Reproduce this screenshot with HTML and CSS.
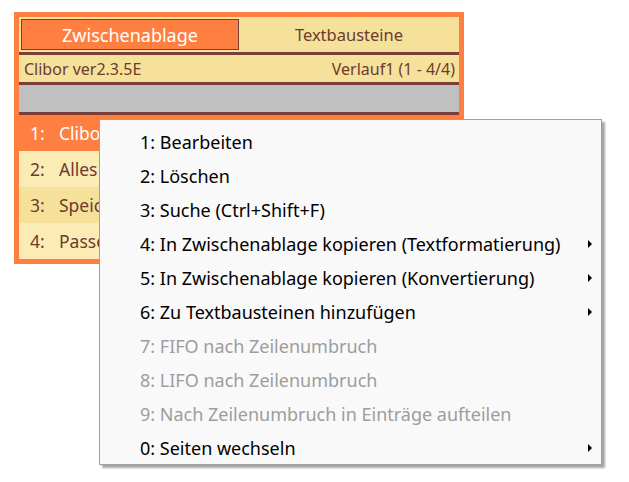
FILE: index.html
```html
<!DOCTYPE html>
<html lang="de">
<head>
  <meta charset="UTF-8" />
  <title>Clibor</title>
  <link rel="stylesheet" href="styles.css">
</head>
<body>

  <div class="clibor">
    <!-- tab switch -->
    <div class="tabs">
      <div class="tab active">Zwischenablage</div>
      <div class="tab">Textbausteine</div>
    </div>

    <div class="info">
      <span>Clibor ver2.3.5E</span>
      <span>Verlauf1 (1 - 4/4)</span>
    </div>

    <div class="search"></div>

    <ul class="entries">
      <li class="entry selected"><span class="num">1:</span><span class="text">Clibor</span></li>
      <li class="entry"><span class="num">2:</span><span class="text">Alles</span></li>
      <li class="entry alt"><span class="num">3:</span><span class="text">Speichern</span></li>
      <li class="entry"><span class="num">4:</span><span class="text">Passen</span></li>
    </ul>
  </div>

  <!-- right click menu -->
  <ul class="menu">
    <li>1: Bearbeiten</li>
    <li>2: Löschen</li>
    <li>3: Suche (Ctrl+Shift+F)</li>
    <li class="sub">4: In Zwischenablage kopieren (Textformatierung)</li>
    <li class="sub">5: In Zwischenablage kopieren (Konvertierung)</li>
    <li class="sub">6: Zu Textbausteinen hinzufügen</li>
    <li class="disabled">7: FIFO nach Zeilenumbruch</li>
    <li class="disabled">8: LIFO nach Zeilenumbruch</li>
    <li class="disabled">9: Nach Zeilenumbruch in Einträge aufteilen</li>
    <li class="sub">0: Seiten wechseln</li>
  </ul>

</body>
</html>
```

FILE: styles.css
```css
body {
  margin: 0;
  background: #fff;
  font-family: 'Noto Sans', sans-serif;
  position: relative;
  height: 482px;
  overflow: hidden;
}

.clibor {
  margin: 12px 0 0 14px;
  width: 440px;
  border: 5px solid #fe7f3f;
  background: #fe7f3f;
}

.tabs {
  display: flex;
  background: #f5e19a;
  padding: 2px 0 2px 2px;
  height: 31px;
  border-bottom: 3px solid #7a3e39;
}

.tab {
  flex: 1;
  display: flex;
  align-items: center;
  justify-content: center;
  color: #6e3b2e;
  font-size: 16.5px;
}

.tab.active {
  flex: 0 0 216px;
  background: #fe7f3f;
  border: 1px solid #7a3e39;
  color: #fff;
  font-size: 18px;
}

.info {
  display: flex;
  justify-content: space-between;
  align-items: center;
  height: 27px;
  padding: 0 4px 0 5px;
  background: #f5e19a;
  color: #6e3b2e;
  font-size: 16px;
  border-bottom: 3px solid #7a3e39;
}

.search {
  height: 27px;
  background: #c0c0c0;
  border-bottom: 3px solid #7a3e39;
}

.entries {
  list-style: none;
  margin: 0;
  padding: 0;
}

.entry {
  height: 36px;
  display: flex;
  align-items: center;
  padding-left: 11px;
  background: #fbebb5;
  color: #6e3b2e;
  font-size: 17.5px;
  white-space: nowrap;
}

.entry.alt {
  background: #f5e19a;
}

.entry.selected {
  background: #fe7f3f;
  color: #fff;
}

.num {
  width: 29px;
}

/* the context menu covers the rest of each line */
.text {
  width: 40px;
  overflow: hidden;
}

.menu {
  position: absolute;
  left: 99px;
  top: 119px;
  width: 501px;
  margin: 0;
  padding: 5px 0 0;
  height: 339px;
  list-style: none;
  background: #f9f9f9;
  border: 1px solid #a0a0a0;
  box-shadow: 3px 3px 2px rgba(0, 0, 0, 0.35);
}

.menu li {
  position: relative;
  height: 34px;
  line-height: 34px;
  padding-left: 40px;
  font-size: 18px;
  color: #000;
}

.menu li.disabled {
  color: #9d9d9d;
}

.menu li.sub::after {
  content: "";
  position: absolute;
  right: 9px;
  top: 13px;
  border-left: 4px solid #000;
  border-top: 4px solid transparent;
  border-bottom: 4px solid transparent;
}
```
